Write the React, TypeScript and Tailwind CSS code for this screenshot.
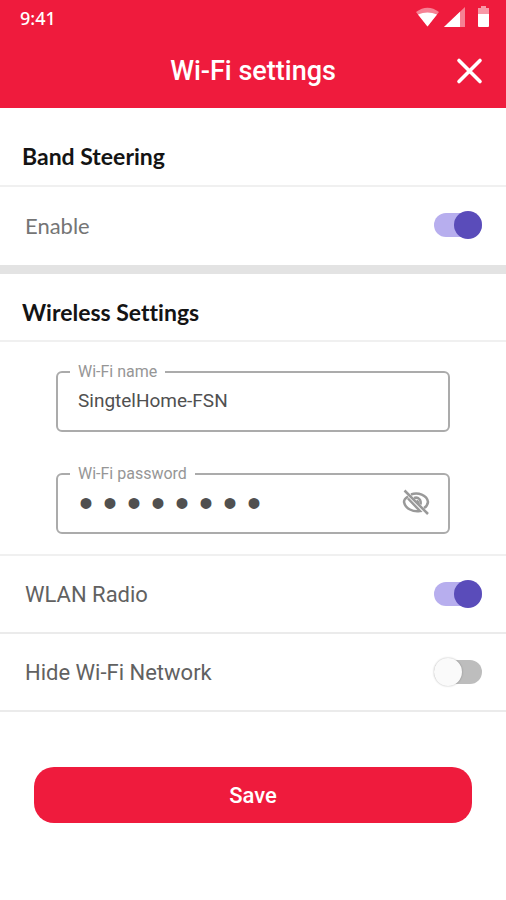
import React, { useState } from 'react';

interface ToggleRowProps {
  id: string;
  label: string;
  checked: boolean;
  onChange: (checked: boolean) => void;
  labelClass?: string;
}

const App: React.FC = () => {
  const [bandSteering, setBandSteering] = useState(true);
  const [wlanRadio, setWlanRadio] = useState(true);
  const [hideNetwork, setHideNetwork] = useState(false);
  const [name, setName] = useState('SingtelHome-FSN');
  const [password, setPassword] = useState('singtel1');
  const [showPassword, setShowPassword] = useState(false);

  return (
    <div className="min-h-screen bg-white font-[Roboto,sans-serif]">
      <header className="bg-[#ef1b3d] text-white">
        <div className="flex h-9 items-center justify-between pl-5 pr-4">
          <span className="font-['Noto_Sans',sans-serif] text-lg font-medium">9:41</span>
          <StatusIcons />
        </div>
        <div className="grid h-18 grid-cols-[1fr_auto_1fr] items-center px-5 pb-0.5">
          <h1 className="col-start-2 text-[27px] font-medium">Wi-Fi settings</h1>
          <button type="button" aria-label="Close" className="justify-self-end py-1 pl-1 pr-0.5">
            <svg className="size-7" viewBox="0 0 28 28" fill="none" stroke="currentColor" strokeWidth="3.6" strokeLinecap="round">
              <path d="M3 3.500 24 24.500M24 3.500 3 24.500" />
            </svg>
          </button>
        </div>
      </header>

      <main>
        <section className="border-b-9 border-[#e3e3e3] pb-0.5">
          <SectionTitle text="Band Steering" className="pt-8 pb-3" />
          <ToggleRow id="band-steering" label="Enable" checked={bandSteering} onChange={setBandSteering} labelClass="font-[Lato,sans-serif] text-[#757575]" />
        </section>

        <section>
          <SectionTitle text="Wireless Settings" className="pt-[22px] pb-[11px]" />
          <div className="space-y-8 border-b-2 border-[#f0f0f0] px-14 pt-5 pb-5">
            <OutlinedField id="wifi-name" label="Wi-Fi name">
              <input id="wifi-name" type="text" value={name} onChange={(e) => setName(e.target.value)} className="h-full w-full min-w-0 pl-2 text-[19px] text-[#505050] outline-none" />
            </OutlinedField>
            <OutlinedField id="wifi-password" label="Wi-Fi password">
              <input
                id="wifi-password"
                type={showPassword ? 'text' : 'password'}
                value={password}
                onChange={(e) => setPassword(e.target.value)}
                className={showPassword ? 'h-full min-w-0 flex-1 pl-2 text-[19px] text-[#505050] outline-none' : "h-full min-w-0 flex-1 pt-2 pl-1 font-['Liberation_Mono',monospace] text-[40px] text-[#505050] outline-none"}
              />
              <button type="button" aria-label="Show password" onClick={() => setShowPassword(!showPassword)} className="text-[#999999]">
                <EyeOffIcon />
              </button>
            </OutlinedField>
          </div>
          <div className="border-b-2 border-[#ebebeb]">
            <ToggleRow id="wlan-radio" label="WLAN Radio" checked={wlanRadio} onChange={setWlanRadio} />
          </div>
          <div className="border-b-2 border-[#ebebeb]">
            <ToggleRow id="hide-network" label="Hide Wi-Fi Network" checked={hideNetwork} onChange={setHideNetwork} />
          </div>
        </section>

        <div className="px-[34px] pt-[55px] pb-8">
          <button type="button" className="h-14 w-full rounded-[20px] bg-[#ef1b3d] text-[22px] font-medium text-white">
            Save
          </button>
        </div>
      </main>
    </div>
  );
};

const SectionTitle = ({ text, className }: { text: string; className: string }) => (
  <h2 className={`border-b-2 border-[#f0f0f0] px-[22px] font-[Lato,sans-serif] text-[23px] leading-[33px] font-bold text-[#141414] [font-variant-ligatures:none] ${className}`}>{text}</h2>
);

const ToggleRow = ({ id, label, checked, onChange, labelClass = 'text-[#616161]' }: ToggleRowProps) => (
  <div className="flex h-19 items-center justify-between pr-6 pl-[25px]">
    <label htmlFor={id} className={`text-[22px] ${labelClass}`}>{label}</label>
    <span className="relative flex h-7 w-12 items-center">
      <input
        id={id}
        type="checkbox"
        role="switch"
        checked={checked}
        onChange={(e) => onChange(e.target.checked)}
        className="peer h-6 w-12 cursor-pointer appearance-none rounded-full bg-[#bdbdbd] checked:bg-[#b7aeee]"
      />
      <span className="pointer-events-none absolute left-0 size-7 rounded-full bg-[#fafafa] shadow-[0_0_2px_rgba(0,0,0,0.3)] peer-checked:right-0 peer-checked:left-auto peer-checked:bg-[#5a4cba] peer-checked:shadow-none" />
    </span>
  </div>
);

const OutlinedField = ({ id, label, children }: { id: string; label: string; children: React.ReactNode }) => (
  <fieldset className="min-w-0 rounded-md border-2 border-[#ababab] pr-4 pl-3">
    <legend className="px-2 text-base leading-5 text-[#969696]">
      <label htmlFor={id}>{label}</label>
    </legend>
    <div className="flex h-12 items-center pb-3">{children}</div>
  </fieldset>
);

const StatusIcons = () => (
  <svg className="h-6 w-20" viewBox="0 0 80 24" fill="currentColor" aria-hidden="true">
    <path d="M6 6Q17.500 -2.500 29 6L17.500 20.500Z" opacity="0.45" />
    <path d="M8 8.500Q17.500 4.500 27 8.500L17.500 20.500Z" />
    <path d="M34 21 55 1V21Z" opacity="0.45" />
    <path d="M34 21 50 5.800V21Z" />
    <path d="M71 0h5v2h3v6H68V2h3Z" opacity="0.55" />
    <path d="M68 8h11v12a1 1 0 0 1-1 1H69a1 1 0 0 1-1-1Z" />
  </svg>
);

const EyeOffIcon = () => (
  <svg className="size-8" viewBox="0 0 32 32" fill="none" stroke="currentColor" strokeWidth="2.500" aria-hidden="true">
    <path d="M11 8.500C18 6 27 9 28 16Q27.500 20 24 22" />
    <path d="M8 10.500Q4 13 4 16C5.500 23 13 26 20 25L8 12.500" />
    <path d="M14 12C18.500 10.500 21.500 14 20.500 18.500" />
    <path d="M16.500 15Q18.500 15.500 18 18" />
    <path d="M4.500 4.500 28 28" />
  </svg>
);

export default App;
